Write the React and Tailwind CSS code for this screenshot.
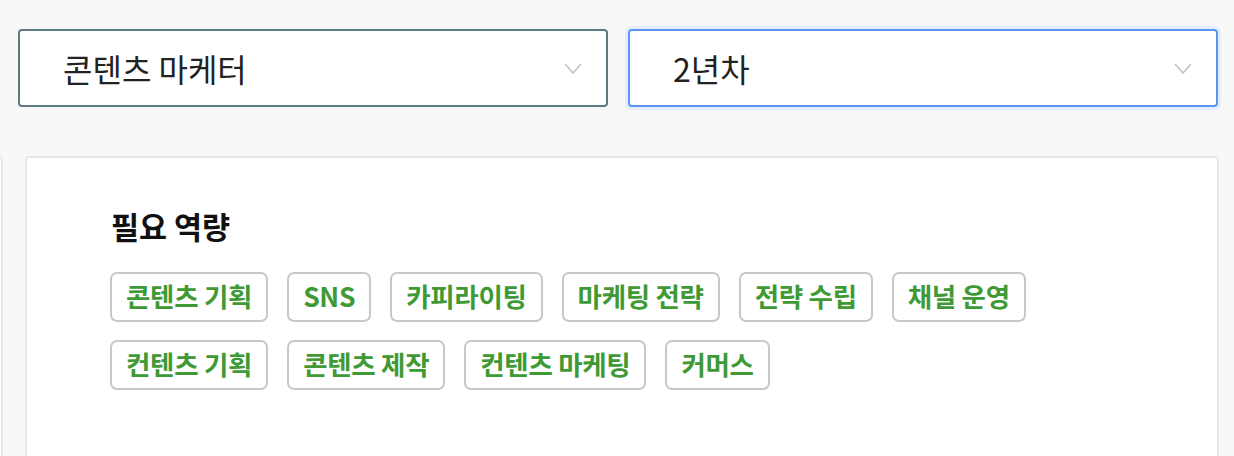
import React from "react";

const font = { fontFamily: '"Noto Sans CJK KR", "Noto Sans", sans-serif' };

function Chevron() {
  return (
    <svg width="18" height="11" viewBox="0 0 18 11" fill="none">
      <path d="M1 1 L9 10 L17 1" stroke="#c2c2c2" strokeWidth="1.6" />
    </svg>
  );
}

function Select({ label, focused }) {
  return (
    <div
      className={
        "flex-1 rounded-[4px] " +
        (focused ? "ring-[3px] ring-[#e3edfb]" : "")
      }
    >
      <div
        className={
          "flex h-[78px] items-center justify-between rounded-[4px] border-2 bg-white pl-[43px] pr-[24px] " +
          (focused ? "border-[#5b95ef]" : "border-[#5e7c80]")
        }
      >
        <span className="text-[32px] leading-none text-[#222]">{label}</span>
        <Chevron />
      </div>
    </div>
  );
}

const row1 = ["콘텐츠 기획", "SNS", "카피라이팅", "마케팅 전략", "전략 수립", "채널 운영"];
const row2 = ["컨텐츠 기획", "콘텐츠 제작", "컨텐츠 마케팅", "커머스"];

function Tag({ t }) {
  return (
    <span className="flex h-[50px] items-center rounded-[7px] border-2 border-[#c8c8c8] px-[14px] text-[26.5px] font-bold leading-none tracking-[-0.3px] text-[#3f9a36]">
      {t}
    </span>
  );
}

export default function App() {
  return (
    <div style={font} className="h-[456px] w-[1234px] overflow-hidden bg-[#f8f8f8]">
      <div className="flex gap-[20px] pl-[18px] pr-[16px] pt-[29px]">
        <Select label="콘텐츠 마케터" />
        <Select label="2년차" focused />
      </div>
      <div className="mt-[49px] flex gap-[22px]">
        <div className="-ml-[1189px] h-[320px] w-[1192px] shrink-0 rounded-[4px] border-2 border-[#e8e8e8] bg-white" />
        <div className="h-[320px] w-[1194px] shrink-0 rounded-[4px] border-2 border-[#e8e8e8] bg-white pl-[83px] pt-[53px]">
          <h2 className="pl-[1px] text-[30.5px] font-bold leading-none text-[#111]">필요 역량</h2>
          <div className="mt-[30px] flex flex-col gap-[18px]">
            <div className="flex gap-[19px]">
              {row1.map((t) => (
                <Tag key={t} t={t} />
              ))}
            </div>
            <div className="flex gap-[19px]">
              {row2.map((t) => (
                <Tag key={t} t={t} />
              ))}
            </div>
          </div>
        </div>
      </div>
    </div>
  );
}
